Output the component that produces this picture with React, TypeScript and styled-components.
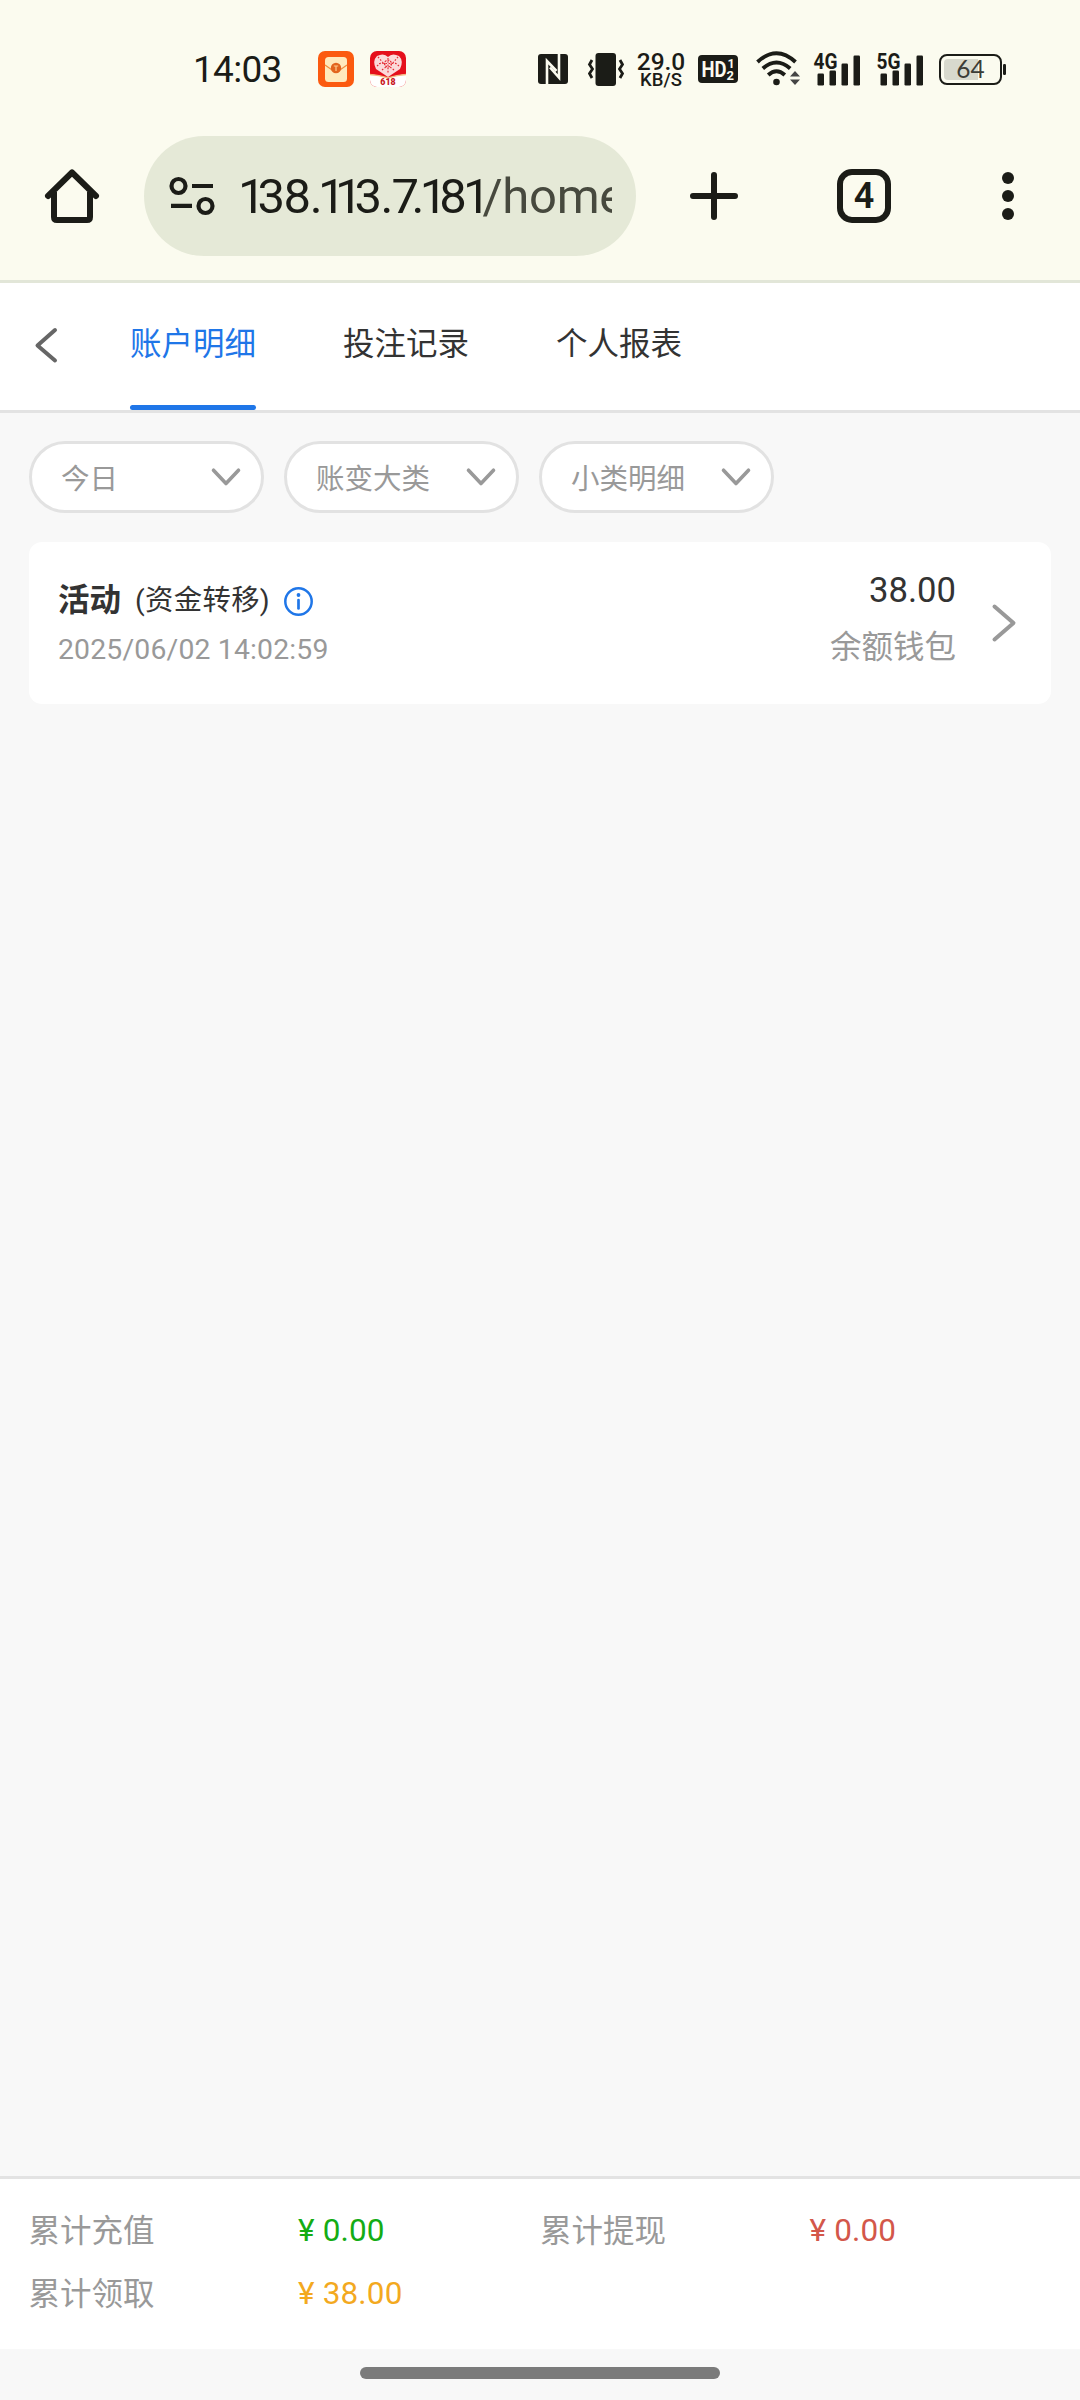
import React from 'react';
import styled, { createGlobalStyle } from 'styled-components';

const INK = '#1b1c17';
const BLUE = '#1f76e8';

const GlobalStyle = createGlobalStyle`
  * { box-sizing: border-box; }
  html, body { margin: 0; padding: 0; }
  body {
    background: #f8f8f8;
    font-family: Roboto, "Noto Sans CJK SC", sans-serif;
    color: #333;
  }
  svg { display: block; flex: none; overflow: visible; }
`;

const Screen = styled.div`
  width: 1080px;
  height: 2400px;
  display: flex;
  flex-direction: column;
  overflow: hidden;
  background: #f8f8f8;
`;

/* ---------- system status bar ---------- */

const StatusBar = styled.header`
  height: 116px;
  display: flex;
  align-items: center;
  padding: 22px 74px 0 193px;
  background: #fbfbef;
  color: ${INK};
`;

const Clock = styled.div`
  width: 125px;
  padding-top: 1px;
  font-size: 37px;
  line-height: 40px;
  letter-spacing: -0.7px;
  white-space: nowrap;
`;

const AppIcons = styled.div`
  display: flex;
  gap: 16px;
  margin-right: 132px;
`;

const Indicators = styled.div`
  display: flex;
  align-items: center;
`;

const Indicator = styled.div<{ $gap: number }>`
  margin-left: ${(p) => p.$gap}px;
`;

const NetSpeed = styled.div`
  width: 50px;
  margin-left: 12px;
  margin-right: 1px;
  padding-top: 3px;
  display: flex;
  flex-direction: column;
  align-items: center;
  font-weight: 500;
`;

const SpeedValue = styled.span`
  font-size: 24.5px;
  line-height: 20px;
`;

const SpeedUnit = styled.span`
  font-size: 18.5px;
  line-height: 17px;
`;

/* ---------- browser toolbar ---------- */

const BrowserBar = styled.nav`
  height: 167px;
  display: flex;
  align-items: flex-start;
  padding: 20px 66px 0 45px;
  background: #fbfbef;
  border-bottom: 3px solid #e2e6d8;
  color: ${INK};
`;

const BarButton = styled.button<{ $gap?: number }>`
  height: 120px;
  margin: 0 0 0 ${(p) => p.$gap ?? 0}px;
  padding: 0;
  border: 0;
  background: none;
  color: inherit;
  display: flex;
  align-items: center;
`;

const AddressPill = styled.div`
  width: 492px;
  height: 120px;
  margin-left: 45px;
  padding: 0 24px 0 25px;
  display: flex;
  align-items: center;
  gap: 23px;
  border-radius: 60px;
  background: #e5e9d7;
`;

const Url = styled.div`
  flex: 1;
  overflow: hidden;
  white-space: nowrap;
  font-size: 49px;
  line-height: 64px;
  padding-top: 2px;
`;

const UrlChar = styled.span<{ $tracking: number }>`
  letter-spacing: ${(p) => p.$tracking}px;
`;

const UrlPath = styled.span`
  color: #47493e;
  letter-spacing: -0.3px;
`;

const TabCount = styled.span`
  width: 54px;
  height: 54px;
  display: flex;
  align-items: center;
  justify-content: center;
  border: 6px solid ${INK};
  border-radius: 15px;
  font: 600 36px/40px Roboto, sans-serif;
`;

/* ---------- page tabs ---------- */

const TabBar = styled.nav`
  height: 130px;
  display: flex;
  align-items: stretch;
  background: #fff;
  border-bottom: 3px solid #e3e3e3;
`;

const BackButton = styled.button`
  width: 130px;
  padding: 0 0 3px 32px;
  border: 0;
  background: none;
  color: #666;
  display: flex;
  align-items: center;
`;

const Tabs = styled.div`
  display: flex;
  gap: 87px;
`;

const Tab = styled.button`
  padding: 0;
  border: 0;
  background: none;
  display: flex;
  flex-direction: column;
`;

const TabText = styled.span<{ $active: boolean }>`
  flex: 1;
  display: flex;
  align-items: center;
  padding-top: 2px;
  font: 400 31.5px/48px Roboto, "Noto Sans CJK SC", sans-serif;
  color: ${(p) => (p.$active ? BLUE : '#333')};
  white-space: nowrap;
`;

const TabLine = styled.span<{ $active: boolean }>`
  width: 126px;
  height: 5px;
  border-radius: 2.5px;
  background: ${(p) => (p.$active ? BLUE : 'transparent')};
`;

/* ---------- filters ---------- */

const Filters = styled.div`
  display: flex;
  gap: 20px;
  padding: 28px 29px 29px;
`;

const Filter = styled.button`
  width: 235px;
  height: 72px;
  padding: 0 20px 0 29px;
  display: flex;
  align-items: center;
  justify-content: space-between;
  border: 3px solid #e2e2e2;
  border-radius: 36px;
  background: #fff;
  color: #999;
  font: 400 28.5px/40px Roboto, "Noto Sans CJK SC", sans-serif;
`;

const FilterLabel = styled.span`
  padding-top: 5px;
`;

/* ---------- record card ---------- */

const Records = styled.main`
  flex: 1;
  padding: 0 29px;
`;

const Record = styled.article`
  height: 162px;
  padding: 0 35px 0 29px;
  display: flex;
  align-items: center;
  border-radius: 13px;
  background: #fff;
`;

const RecordInfo = styled.div`
  flex: 1;
  display: flex;
  flex-direction: column;
  padding-top: 4px;
`;

const RecordTitle = styled.div`
  display: flex;
  align-items: center;
  height: 50px;
`;

const Category = styled.strong`
  font-size: 31.5px;
  line-height: 48px;
  font-weight: 700;
`;

const SubCategory = styled.span`
  margin: 0 14px;
  font-size: 28.35px;
  line-height: 48px;
  letter-spacing: 0.35px;
`;

const RecordTime = styled.time`
  height: 48px;
  font-size: 28.35px;
  line-height: 48px;
  letter-spacing: 0.18px;
  color: #999;
`;

const RecordAmount = styled.div`
  display: flex;
  flex-direction: column;
  align-items: flex-end;
  margin-right: 36px;
  padding-bottom: 5px;
`;

const Amount = styled.span`
  font-size: 34.65px;
  line-height: 54px;
`;

const Wallet = styled.span`
  font-size: 31.5px;
  line-height: 61px;
  color: #999;
`;

/* ---------- totals ---------- */

const Totals = styled.footer`
  height: 173px;
  padding: 20px 28.5px 0;
  display: grid;
  grid-template-columns: 269.5px 242px 269.5px 1fr;
  grid-auto-rows: 63px;
  align-items: center;
  border-top: 3px solid #e3e3e3;
  background: #fff;
  font-size: 31.5px;
  line-height: 48px;
`;

const TotalLabel = styled.span`
  padding-top: 2px;
  color: #999;
`;

const TotalValue = styled.span<{ $color: string }>`
  color: ${(p) => p.$color};
  letter-spacing: 0.15px;
  white-space: nowrap;
`;

const GestureArea = styled.div`
  height: 51px;
  padding-top: 18px;
  display: flex;
  justify-content: center;
`;

const GestureHandle = styled.div`
  width: 360px;
  height: 12px;
  border-radius: 6px;
  background: #7b7b7b;
`;

/* ---------- drawings ---------- */

const EnvelopeApp = () => (
  <svg width="36" height="36" viewBox="0 0 36 36">
    <rect width="36" height="36" rx="7" fill="#fb5a10" />
    <rect x="7" y="6" width="22" height="25" rx="3.5" fill="#ffe9bd" />
    <path d="M7 14 L14 19 H22 L29 14" fill="none" stroke="#f08a3c" strokeWidth="1.2" />
    <circle cx="18" cy="17" r="5.2" fill="#e2641f" />
    <path d="M15.8 15 H20.2 M18 15 V20" stroke="#ffc98a" strokeWidth="1.2" />
  </svg>
);

const SaleApp = () => (
  <svg width="36" height="36" viewBox="0 0 36 36">
    <defs>
      <clipPath id="saleClip"><rect width="36" height="36" rx="7" /></clipPath>
    </defs>
    <g clipPath="url(#saleClip)">
      <rect width="36" height="36" fill="#e5101c" />
      <path d="M0 23 Q9 24 18 27 Q27 24 36 23 V36 H0 Z" fill="#fff" />
      <path d="M0 23.5 Q9 24 18 27 Q27 24 36 23.5" fill="none" stroke="#f3bd84" strokeWidth="1.4" />
      <path d="M18 26 L6 18 Q2 10 7 5 Q14 1.500 18 6 Q22 1.500 29 5 Q34 10 30 18 Z" fill="#fbdada" />
      <g fill="none" stroke="#e5303a" strokeWidth="1.2">
        <circle cx="18" cy="12.5" r="3.4" strokeDasharray="2 1" />
        <path d="M18 7 V23 M9 12.500 H27 M8 6 L15 14 M28 6 L21 14 M7 15 L12 11 M29 15 L24 11 M12 19 L16 16 M24 19 L20 16" strokeDasharray="1.6 1.6" />
      </g>
      <text x="18" y="34" textAnchor="middle" fontFamily="Roboto, sans-serif" fontSize="8.8" fontWeight="900" fill="#c71722">618</text>
    </g>
  </svg>
);

const NfcIcon = () => (
  <svg width="30" height="30" viewBox="0 0 30 30">
    <rect width="30" height="30" rx="3" fill={INK} />
    <path d="M9 30 V7 L18.500 17" fill="none" stroke="#fbfbef" strokeWidth="2.6" />
    <path d="M21 0 V23.500 L12 13.500" fill="none" stroke="#fbfbef" strokeWidth="2.6" />
  </svg>
);

const VibrateIcon = () => (
  <svg width="36" height="33" viewBox="0 0 36 33">
    <rect x="7.5" y="0" width="20.5" height="33" rx="3" fill={INK} />
    <path d="M4 7 L1.500 11.500 L4.500 16 L1.500 20.500 L4 25 M32 7 L34.500 11.500 L31.500 16 L34.500 20.500 L32 25" fill="none" stroke={INK} strokeWidth="2.8" />
  </svg>
);

const HdIcon = () => (
  <svg width="40" height="28" viewBox="0 0 40 28">
    <rect width="40" height="28" rx="4" fill={INK} />
    <g fill="#fbfbef" fontFamily="Roboto, sans-serif" fontWeight="700">
      <text x="3.5" y="22" fontSize="22" textLength="25" lengthAdjust="spacingAndGlyphs">HD</text>
      <text x="29.5" y="13" fontSize="12.5">1</text>
      <text x="28.5" y="25" fontSize="13">2</text>
    </g>
  </svg>
);

const WifiIcon = () => (
  <svg width="45" height="36" viewBox="0 0 45 36">
    <g fill="none" stroke={INK} strokeWidth="3.9">
      <path d="M1.500 11 Q20.500 -6.500 39.500 11" />
      <path d="M6.800 17.500 Q20.500 5.500 34.200 17.500" />
      <path d="M12.200 24 Q20.500 16.500 28.800 24" />
    </g>
    <circle cx="20.5" cy="31" r="3.3" fill={INK} />
    <path d="M34 25.500 L39 20 L44 25.500 Z M34 28.500 L39 34 L44 28.500 Z" fill="#444" />
  </svg>
);

const SignalIcon = ({ label }: { label: string }) => (
  <svg width="47" height="33" viewBox="0 0 47 33">
    <g fill={INK}>
      <rect x="3.5" y="20.5" width="6.500" height="12" rx="1.2" />
      <rect x="15.5" y="17.5" width="6.500" height="15" rx="1.2" />
      <rect x="27.5" y="10.5" width="6.500" height="22" rx="1.2" />
      <rect x="39.5" y="2.5" width="6.500" height="30" rx="1.2" />
      <text x="-0.5" y="15.5" fontFamily="Roboto, sans-serif" fontWeight="700" fontSize="21.5" textLength="24" lengthAdjust="spacingAndGlyphs">{label}</text>
    </g>
  </svg>
);

const BatteryIcon = () => (
  <svg width="67" height="31" viewBox="0 0 67 31">
    <rect x="1" y="1" width="61" height="29" rx="7" fill="none" stroke={INK} strokeWidth="2" />
    <path d="M9 5 H39 V26 H9 Q5 26 5 22 V9 Q5 5 9 5 Z" fill="#d8d9cd" />
    <rect x="64" y="10" width="3" height="11" rx="1.2" fill={INK} />
    <text x="31.5" y="24.2" textAnchor="middle" fontFamily="Lato, sans-serif" fontSize="24.500" fill="#3c3d37">64</text>
  </svg>
);

const HomeIcon = () => (
  <svg width="54" height="54" viewBox="0 0 54 54" fill="none" stroke={INK} strokeWidth="6">
    <path d="M9 23 V48 Q9 51 12 51 H42 Q45 51 45 48 V23" />
    <path d="M3 27 L27 3.500 L51 27" strokeLinecap="round" strokeLinejoin="round" />
  </svg>
);

const TuneIcon = () => (
  <svg width="46" height="38" viewBox="0 0 46 38" fill="none" stroke={INK} strokeWidth="4.2">
    <circle cx="9.5" cy="9" r="7" />
    <path d="M23 9 H44 M2 28.800 H23" />
    <circle cx="36.5" cy="29" r="7" />
  </svg>
);

const PlusIcon = () => (
  <svg width="48" height="48" viewBox="0 0 48 48" stroke={INK} strokeWidth="6" strokeLinecap="round">
    <path d="M24 3 V45 M3 24 H45" />
  </svg>
);

const MenuIcon = () => (
  <svg width="12" height="48" viewBox="0 0 12 48" fill={INK}>
    <circle cx="6" cy="6" r="6" />
    <circle cx="6" cy="24" r="6" />
    <circle cx="6" cy="42" r="6" />
  </svg>
);

const BackIcon = () => (
  <svg width="26" height="38" viewBox="0 0 26 38" fill="none" stroke="currentColor" strokeWidth="4" strokeLinecap="round" strokeLinejoin="round">
    <path d="M23 4 L5.500 19.500 L23 34.500" />
  </svg>
);

const DownIcon = () => (
  <svg width="30" height="18" viewBox="0 0 30 18" fill="none" stroke="#999" strokeWidth="3.6" strokeLinecap="round" strokeLinejoin="round">
    <path d="M2.500 2.200 L15 15.500 L27.500 2.200" />
  </svg>
);

const NextIcon = () => (
  <svg width="24" height="38" viewBox="0 0 24 38" fill="none" stroke="#999" strokeWidth="4" strokeLinecap="round" strokeLinejoin="round">
    <path d="M2.500 2.500 L21.500 19 L2.500 35.500" />
  </svg>
);

const InfoIcon = () => (
  <svg width="29" height="29" viewBox="0 0 29 29">
    <circle cx="14.5" cy="14.5" r="13.2" fill="none" stroke={BLUE} strokeWidth="2.5" />
    <circle cx="14.5" cy="8" r="1.9" fill={BLUE} />
    <path d="M14.500 13 V21.500" stroke={BLUE} strokeWidth="2.7" strokeLinecap="round" />
  </svg>
);

/* ---------- data ---------- */

const tabs = ['账户明细', '投注记录', '个人报表'];
const filters = ['今日', '账变大类', '小类明细'];
const totals = [
  { label: '累计充值', value: '¥ 0.00', color: '#14ac14' },
  { label: '累计提现', value: '¥ 0.00', color: '#d3574a' },
  { label: '累计领取', value: '¥ 38.00', color: '#f3a91f' },
];

/* Proportional figures: the one, the seven and the dot sit closer to what follows. */
const trackingAfter = (ch: string, next?: string) => {
  let t = -1.5;
  if (ch === '1') t -= 6.5;
  if (ch === '7') t -= 6;
  if (ch === '.') t -= 0.6;
  if (next === '1') t -= 2.5;
  return t;
};

const Host = ({ value }: { value: string }) => (
  <>
    {value.split('').map((ch, i) => (
      <UrlChar key={i} $tracking={trackingAfter(ch, value[i + 1])}>{ch}</UrlChar>
    ))}
  </>
);

export default function App() {
  return (
    <Screen lang="zh-CN">
      <GlobalStyle />
      <StatusBar>
        <Clock>14:03</Clock>
        <AppIcons>
          <EnvelopeApp />
          <SaleApp />
        </AppIcons>
        <Indicators>
          <NfcIcon />
          <Indicator $gap={20}><VibrateIcon /></Indicator>
          <NetSpeed>
            <SpeedValue>29.0</SpeedValue>
            <SpeedUnit>KB/S</SpeedUnit>
          </NetSpeed>
          <Indicator $gap={11}><HdIcon /></Indicator>
          <Indicator $gap={18}><WifiIcon /></Indicator>
          <Indicator $gap={13}><SignalIcon label="4G" /></Indicator>
          <Indicator $gap={16}><SignalIcon label="5G" /></Indicator>
          <Indicator $gap={15}><BatteryIcon /></Indicator>
        </Indicators>
      </StatusBar>

      <BrowserBar>
        <BarButton><HomeIcon /></BarButton>
        <AddressPill>
          <TuneIcon />
          <Url>
            <Host value="138.113.7.181" />
            <UrlPath>/home</UrlPath>
          </Url>
        </AddressPill>
        <BarButton $gap={54}><PlusIcon /></BarButton>
        <BarButton $gap={99}><TabCount>4</TabCount></BarButton>
        <BarButton $gap={111}><MenuIcon /></BarButton>
      </BrowserBar>

      <TabBar>
        <BackButton><BackIcon /></BackButton>
        <Tabs>
          {tabs.map((t, i) => (
            <Tab key={t}>
              <TabText $active={i === 0}>{t}</TabText>
              <TabLine $active={i === 0} />
            </Tab>
          ))}
        </Tabs>
      </TabBar>

      <Filters>
        {filters.map((f) => (
          <Filter key={f}>
            <FilterLabel>{f}</FilterLabel>
            <DownIcon />
          </Filter>
        ))}
      </Filters>

      <Records>
        <Record>
          <RecordInfo>
            <RecordTitle>
              <Category>活动</Category>
              <SubCategory>(资金转移)</SubCategory>
              <InfoIcon />
            </RecordTitle>
            <RecordTime>2025/06/02 14:02:59</RecordTime>
          </RecordInfo>
          <RecordAmount>
            <Amount>38.00</Amount>
            <Wallet>余额钱包</Wallet>
          </RecordAmount>
          <NextIcon />
        </Record>
      </Records>

      <Totals>
        {totals.map((t) => (
          <React.Fragment key={t.label}>
            <TotalLabel>{t.label}</TotalLabel>
            <TotalValue $color={t.color}>{t.value}</TotalValue>
          </React.Fragment>
        ))}
      </Totals>
      <GestureArea>
        <GestureHandle />
      </GestureArea>
    </Screen>
  );
}
